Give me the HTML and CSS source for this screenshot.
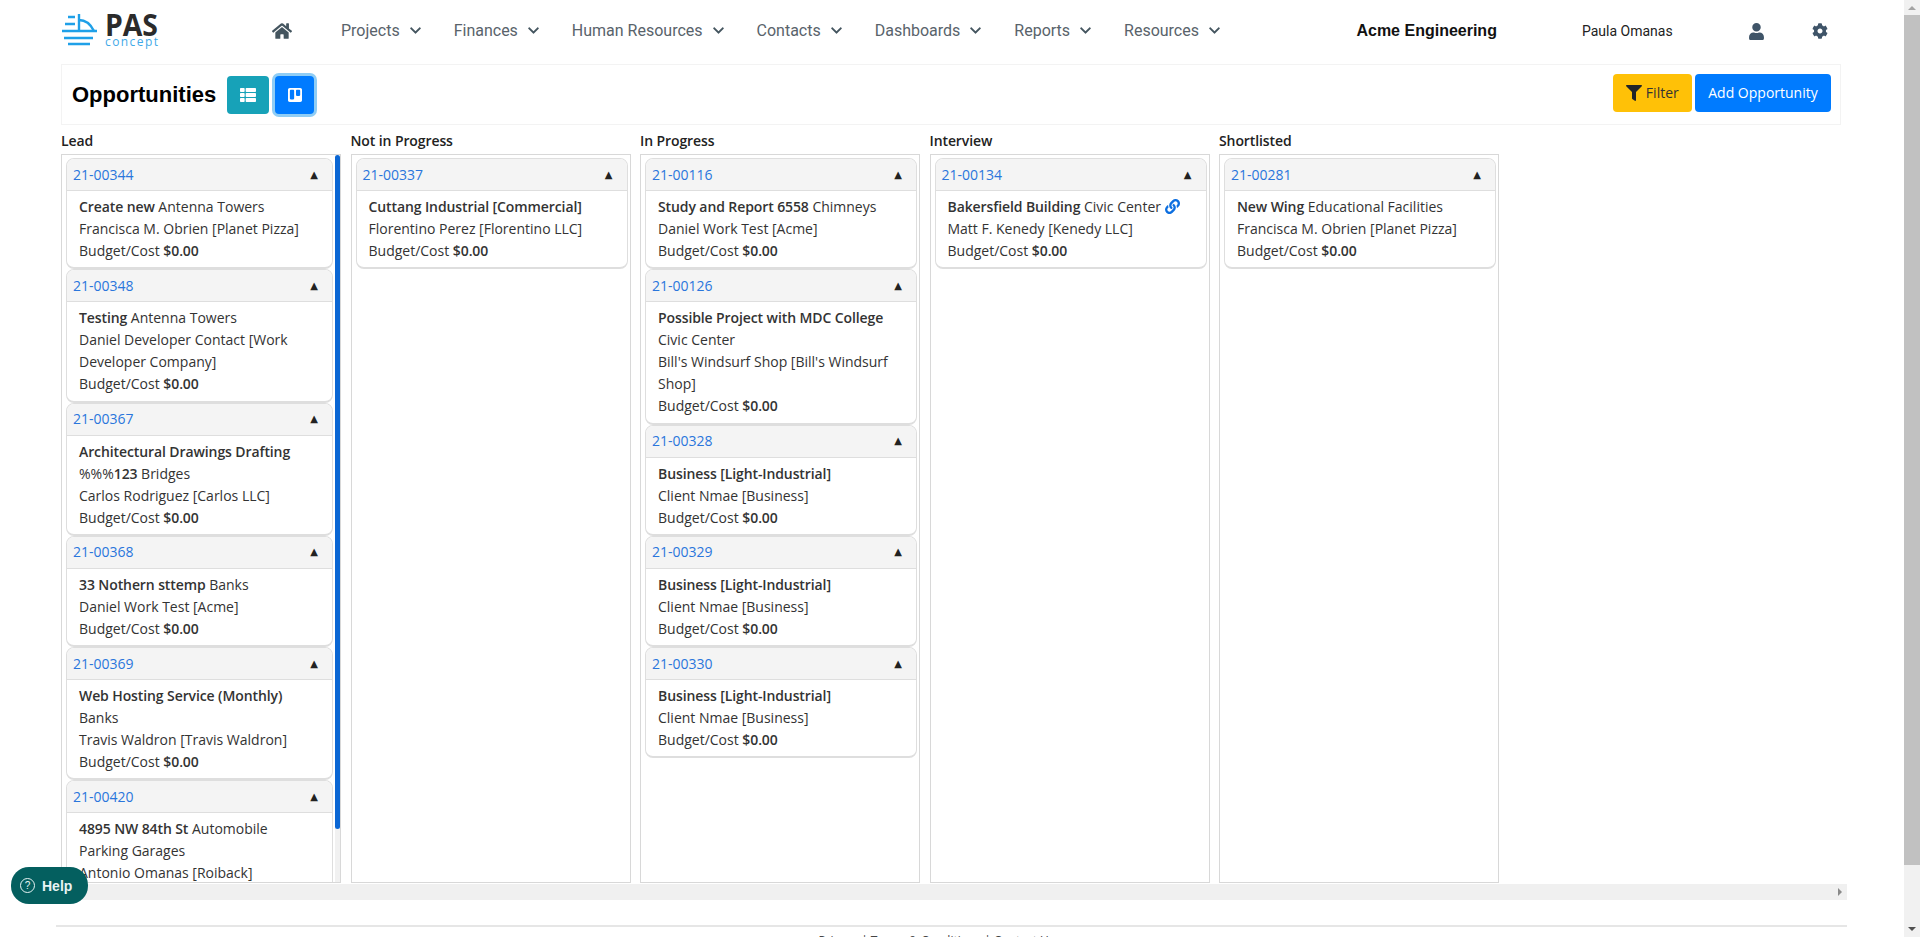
FILE: index.html
```html
<!DOCTYPE html>
<html lang="en">
<head>
<meta charset="UTF-8">
<title>Opportunities</title>
<link rel="stylesheet" href="styles.css">
</head>
<body>
  <div class="page">
    <nav class="navbar">
      <svg class="logo" width="100" height="42" viewBox="0 0 100 42">
        <g stroke="#1fa0e8" stroke-width="2.4" fill="none">
          <path d="M7 7h7M4 14h10M1 21h35M3 28h29M7 34h22"/>
          <path d="M18 4v17M18 10c7 0 12 5 15 11"/>
        </g>
        <text class="logo-pas" x="44" y="26" textLength="53" lengthAdjust="spacingAndGlyphs">PAS</text>
        <text class="logo-sub" x="44" y="36" textLength="53" lengthAdjust="spacing">concept</text>
      </svg>
      <svg class="home-icon" width="20" height="18" viewBox="0 0 576 512"><path d="M280.37 148.26L96 300.11V464a16 16 0 0 0 16 16l112.06-.29a16 16 0 0 0 15.92-16V368a16 16 0 0 1 16-16h64a16 16 0 0 1 16 16v95.64a16 16 0 0 0 16 16.05L464 480a16 16 0 0 0 16-16V300L295.67 148.26a12.19 12.19 0 0 0-15.3 0zM571.6 251.47L488 182.56V44.05a12 12 0 0 0-12-12h-56a12 12 0 0 0-12 12v72.61L318.47 43a48 48 0 0 0-61 0L4.34 251.47a12 12 0 0 0-1.6 16.9l25.5 31A12 12 0 0 0 45.15 301l235.22-193.74a12.19 12.19 0 0 1 15.3 0L530.9 301a12 12 0 0 0 16.9-1.6l25.5-31a12 12 0 0 0-1.7-16.93z"/></svg>
      <ul class="menu">
        <li>Projects <svg class="chev" width="11" height="13" viewBox="0 0 448 512"><path d="M207.029 381.476L12.686 187.132c-9.373-9.373-9.373-24.569 0-33.941l22.667-22.667c9.357-9.357 24.522-9.375 33.901-.04L224 284.505l154.745-154.021c9.379-9.335 24.544-9.317 33.901.04l22.667 22.667c9.373 9.373 9.373 24.569 0 33.941L240.971 381.476c-9.373 9.372-24.569 9.372-33.942 0z"/></svg></li>
        <li>Finances <svg class="chev" width="11" height="13" viewBox="0 0 448 512"><path d="M207.029 381.476L12.686 187.132c-9.373-9.373-9.373-24.569 0-33.941l22.667-22.667c9.357-9.357 24.522-9.375 33.901-.04L224 284.505l154.745-154.021c9.379-9.335 24.544-9.317 33.901.04l22.667 22.667c9.373 9.373 9.373 24.569 0 33.941L240.971 381.476c-9.373 9.372-24.569 9.372-33.942 0z"/></svg></li>
        <li>Human Resources <svg class="chev" width="11" height="13" viewBox="0 0 448 512"><path d="M207.029 381.476L12.686 187.132c-9.373-9.373-9.373-24.569 0-33.941l22.667-22.667c9.357-9.357 24.522-9.375 33.901-.04L224 284.505l154.745-154.021c9.379-9.335 24.544-9.317 33.901.04l22.667 22.667c9.373 9.373 9.373 24.569 0 33.941L240.971 381.476c-9.373 9.372-24.569 9.372-33.942 0z"/></svg></li>
        <li>Contacts <svg class="chev" width="11" height="13" viewBox="0 0 448 512"><path d="M207.029 381.476L12.686 187.132c-9.373-9.373-9.373-24.569 0-33.941l22.667-22.667c9.357-9.357 24.522-9.375 33.901-.04L224 284.505l154.745-154.021c9.379-9.335 24.544-9.317 33.901.04l22.667 22.667c9.373 9.373 9.373 24.569 0 33.941L240.971 381.476c-9.373 9.372-24.569 9.372-33.942 0z"/></svg></li>
        <li>Dashboards <svg class="chev" width="11" height="13" viewBox="0 0 448 512"><path d="M207.029 381.476L12.686 187.132c-9.373-9.373-9.373-24.569 0-33.941l22.667-22.667c9.357-9.357 24.522-9.375 33.901-.04L224 284.505l154.745-154.021c9.379-9.335 24.544-9.317 33.901.04l22.667 22.667c9.373 9.373 9.373 24.569 0 33.941L240.971 381.476c-9.373 9.372-24.569 9.372-33.942 0z"/></svg></li>
        <li>Reports <svg class="chev" width="11" height="13" viewBox="0 0 448 512"><path d="M207.029 381.476L12.686 187.132c-9.373-9.373-9.373-24.569 0-33.941l22.667-22.667c9.357-9.357 24.522-9.375 33.901-.04L224 284.505l154.745-154.021c9.379-9.335 24.544-9.317 33.901.04l22.667 22.667c9.373 9.373 9.373 24.569 0 33.941L240.971 381.476c-9.373 9.372-24.569 9.372-33.942 0z"/></svg></li>
        <li>Resources <svg class="chev" width="11" height="13" viewBox="0 0 448 512"><path d="M207.029 381.476L12.686 187.132c-9.373-9.373-9.373-24.569 0-33.941l22.667-22.667c9.357-9.357 24.522-9.375 33.901-.04L224 284.505l154.745-154.021c9.379-9.335 24.544-9.317 33.901.04l22.667 22.667c9.373 9.373 9.373 24.569 0 33.941L240.971 381.476c-9.373 9.372-24.569 9.372-33.942 0z"/></svg></li>
      </ul>
      <div class="company">Acme Engineering</div>
      <div class="username">Paula Omanas</div>
      <svg class="user-icon" width="15" height="17" viewBox="0 0 448 512"><path d="M224 256c70.7 0 128-57.3 128-128S294.7 0 224 0 96 57.3 96 128s57.3 128 128 128zm89.6 32h-16.7c-22.2 10.2-46.9 16-72.9 16s-50.6-5.8-72.9-16h-16.7C60.2 288 0 348.2 0 422.4V464c0 26.5 21.5 48 48 48h352c26.5 0 48-21.5 48-48v-41.6c0-74.2-60.2-134.4-134.4-134.4z"/></svg>
      <svg class="gear-icon" width="16" height="16" viewBox="0 0 512 512"><path d="M487.4 315.7l-42.6-24.6c4.3-23.2 4.3-47 0-70.2l42.6-24.6c4.9-2.8 7.1-8.6 5.5-14-11.1-35.6-30-67.8-54.7-94.6-3.8-4.1-10-5.1-14.8-2.3L380.8 110c-17.9-15.4-38.5-27.3-60.8-35.1V25.8c0-5.6-3.9-10.5-9.4-11.7-36.7-8.2-74.3-7.8-109.2 0-5.5 1.2-9.4 6.1-9.4 11.7V75c-22.2 7.9-42.8 19.8-60.8 35.1L88.7 85.5c-4.9-2.8-11-1.9-14.8 2.3-24.7 26.7-43.6 58.9-54.7 94.6-1.7 5.4.6 11.2 5.5 14L67.3 221c-4.3 23.2-4.3 47 0 70.2l-42.6 24.6c-4.9 2.8-7.1 8.6-5.5 14 11.1 35.6 30 67.8 54.7 94.6 3.8 4.1 10 5.1 14.8 2.3l42.6-24.6c17.9 15.4 38.5 27.3 60.8 35.1v49.2c0 5.6 3.9 10.5 9.4 11.7 36.7 8.2 74.3 7.8 109.2 0 5.5-1.2 9.4-6.1 9.4-11.7v-49.2c22.2-7.9 42.8-19.8 60.8-35.1l42.6 24.6c4.9 2.8 11 1.9 14.8-2.3 24.7-26.7 43.6-58.9 54.7-94.6 1.5-5.5-.7-11.3-5.6-14.1zM256 336c-44.1 0-80-35.9-80-80s35.9-80 80-80 80 35.9 80 80-35.9 80-80 80z"/></svg>
    </nav>

    <div class="title-panel">
      <h1>Opportunities</h1>
      <button class="view-btn view-list"><svg width="16" height="16" viewBox="0 0 512 512"><path d="M149.333 216v80c0 13.255-10.745 24-24 24H24c-13.255 0-24-10.745-24-24v-80c0-13.255 10.745-24 24-24h101.333c13.255 0 24 10.745 24 24zM0 376v80c0 13.255 10.745 24 24 24h101.333c13.255 0 24-10.745 24-24v-80c0-13.255-10.745-24-24-24H24c-13.255 0-24 10.745-24 24zM125.333 32H24C10.745 32 0 42.745 0 56v80c0 13.255 10.745 24 24 24h101.333c13.255 0 24-10.745 24-24V56c0-13.255-10.745-24-24-24zm80 448H488c13.255 0 24-10.745 24-24v-80c0-13.255-10.745-24-24-24H205.333c-13.255 0-24 10.745-24 24v80c0 13.255 10.745 24 24 24zm-24-424v80c0 13.255 10.745 24 24 24H488c13.255 0 24-10.745 24-24V56c0-13.255-10.745-24-24-24H205.333c-13.255 0-24 10.745-24 24zm24 264H488c13.255 0 24-10.745 24-24v-80c0-13.255-10.745-24-24-24H205.333c-13.255 0-24 10.745-24 24v80c0 13.255 10.745 24 24 24z"/></svg></button>
      <button class="view-btn view-board"><svg width="14" height="16" viewBox="0 0 448 512"><path d="M392.3 32H56.1C25.1 32 0 57.1 0 88c-.1 0 0-4 0 336 0 30.9 25.1 56 56 56h336.2c30.8-.2 55.7-25.2 55.7-56V88c.1-30.8-24.8-55.8-55.6-56zM197 371.3c-.2 14.7-12.1 26.6-26.9 26.6H87.4c-14.8.1-26.9-11.8-27-26.6V117.1c0-14.8 12-26.9 26.9-26.9h82.9c14.8 0 26.9 12 26.9 26.9v254.2zm193.1-112c0 14.8-12 26.9-26.9 26.9h-81c-14.8 0-26.9-12-26.9-26.9V117.2c0-14.8 12-26.9 26.8-26.9h81.1c14.8 0 26.9 12 26.9 26.9v142.1z"/></svg></button>
      <div class="panel-actions">
        <button class="btn-filter"><svg width="16" height="16" viewBox="0 0 512 512"><path d="M487.976 0H24.028C2.71 0-8.047 25.866 7.058 40.971L192 225.941V432c0 7.831 3.821 15.17 10.237 19.662l80 55.98C298.02 518.69 320 507.493 320 487.98V225.941l184.947-184.97C520.021 25.896 509.338 0 487.976 0z"/></svg> Filter</button>
        <button class="btn-add">Add Opportunity</button>
      </div>
    </div>

    <div class="board">
      <section class="stage">
        <div class="stage-name">Lead</div>
        <div class="stage-box stage-scrolled">
          <div class="cards">
            <div class="card"><div class="card-head"><a href="#">21-00344</a><span class="arrow">▲</span></div><div class="card-body"><b>Create new</b> Antenna Towers<br>Francisca M. Obrien [Planet Pizza]<br>Budget/Cost <b>$0.00</b></div></div>
            <div class="card"><div class="card-head"><a href="#">21-00348</a><span class="arrow">▲</span></div><div class="card-body"><b>Testing</b> Antenna Towers<br>Daniel Developer Contact [Work Developer Company]<br>Budget/Cost <b>$0.00</b></div></div>
            <div class="card"><div class="card-head"><a href="#">21-00367</a><span class="arrow">▲</span></div><div class="card-body"><b>Architectural Drawings Drafting</b><br>%%%<b>123</b> Bridges<br>Carlos Rodriguez [Carlos LLC]<br>Budget/Cost <b>$0.00</b></div></div>
            <div class="card"><div class="card-head"><a href="#">21-00368</a><span class="arrow">▲</span></div><div class="card-body"><b>33 Nothern sttemp</b> Banks<br>Daniel Work Test [Acme]<br>Budget/Cost <b>$0.00</b></div></div>
            <div class="card"><div class="card-head"><a href="#">21-00369</a><span class="arrow">▲</span></div><div class="card-body"><b>Web Hosting Service (Monthly)</b><br>Banks<br>Travis Waldron [Travis Waldron]<br>Budget/Cost <b>$0.00</b></div></div>
            <div class="card"><div class="card-head"><a href="#">21-00420</a><span class="arrow">▲</span></div><div class="card-body"><b>4895 NW 84th St</b> Automobile<br>Parking Garages<br>Antonio Omanas [Roiback]<br>Budget/Cost <b>$0.00</b></div></div>
          </div>
          <div class="stage-scroll"><div class="stage-thumb"></div></div>
        </div>
      </section>

      <section class="stage">
        <div class="stage-name">Not in Progress</div>
        <div class="stage-box">
          <div class="cards">
            <div class="card"><div class="card-head"><a href="#">21-00337</a><span class="arrow">▲</span></div><div class="card-body"><b>Cuttang Industrial [Commercial]</b><br>Florentino Perez [Florentino LLC]<br>Budget/Cost <b>$0.00</b></div></div>
          </div>
        </div>
      </section>

      <section class="stage">
        <div class="stage-name">In Progress</div>
        <div class="stage-box">
          <div class="cards">
            <div class="card"><div class="card-head"><a href="#">21-00116</a><span class="arrow">▲</span></div><div class="card-body"><b>Study and Report 6558</b> Chimneys<br>Daniel Work Test [Acme]<br>Budget/Cost <b>$0.00</b></div></div>
            <div class="card"><div class="card-head"><a href="#">21-00126</a><span class="arrow">▲</span></div><div class="card-body"><b>Possible Project with MDC College</b><br>Civic Center<br>Bill's Windsurf Shop [Bill's Windsurf Shop]<br>Budget/Cost <b>$0.00</b></div></div>
            <div class="card"><div class="card-head"><a href="#">21-00328</a><span class="arrow">▲</span></div><div class="card-body"><b>Business [Light-Industrial]</b><br>Client Nmae [Business]<br>Budget/Cost <b>$0.00</b></div></div>
            <div class="card"><div class="card-head"><a href="#">21-00329</a><span class="arrow">▲</span></div><div class="card-body"><b>Business [Light-Industrial]</b><br>Client Nmae [Business]<br>Budget/Cost <b>$0.00</b></div></div>
            <div class="card"><div class="card-head"><a href="#">21-00330</a><span class="arrow">▲</span></div><div class="card-body"><b>Business [Light-Industrial]</b><br>Client Nmae [Business]<br>Budget/Cost <b>$0.00</b></div></div>
          </div>
        </div>
      </section>

      <section class="stage">
        <div class="stage-name">Interview</div>
        <div class="stage-box">
          <div class="cards">
            <div class="card"><div class="card-head"><a href="#">21-00134</a><span class="arrow">▲</span></div><div class="card-body"><b>Bakersfield Building</b> Civic Center <svg class="link-icon" width="15" height="15" viewBox="0 0 512 512"><path d="M326.612 185.391c59.747 59.809 58.927 155.698.36 214.59-.11.12-.24.25-.36.37l-67.2 67.2c-59.27 59.27-155.699 59.262-214.96 0-59.27-59.26-59.27-155.7 0-214.96l37.106-37.106c9.84-9.84 26.786-3.3 27.294 10.606.648 17.722 3.826 35.527 9.69 52.721 1.986 5.822.567 12.262-3.783 16.612l-13.087 13.087c-28.026 28.026-28.905 73.66-1.155 101.96 28.024 28.579 74.086 28.749 102.325.51l67.2-67.19c28.191-28.191 28.073-73.757 0-101.83-3.701-3.694-7.429-6.564-10.341-8.569a16.037 16.037 0 0 1-6.947-12.606c-.396-10.567 3.348-21.456 11.698-29.806l21.054-21.055c5.521-5.521 14.182-6.199 20.584-1.731a152.482 152.482 0 0 1 20.522 17.197zM467.547 44.449c-59.261-59.262-155.69-59.27-214.96 0l-67.2 67.2c-.12.12-.25.25-.36.37-58.566 58.892-59.387 154.781.36 214.59a152.454 152.454 0 0 0 20.521 17.196c6.402 4.468 15.064 3.789 20.584-1.731l21.054-21.055c8.35-8.35 12.094-19.239 11.698-29.806a16.037 16.037 0 0 0-6.947-12.606c-2.912-2.005-6.64-4.875-10.341-8.569-28.073-28.073-28.191-73.639 0-101.83l67.2-67.19c28.239-28.239 74.3-28.069 102.325.51 27.75 28.3 26.872 73.934-1.155 101.96l-13.087 13.087c-4.35 4.35-5.769 10.79-3.783 16.612 5.864 17.194 9.042 34.999 9.69 52.721.509 13.906 17.454 20.446 27.294 10.606l37.106-37.106c59.271-59.259 59.271-155.699.001-214.959z"/></svg><br>Matt F. Kenedy [Kenedy LLC]<br>Budget/Cost <b>$0.00</b></div></div>
          </div>
        </div>
      </section>

      <section class="stage">
        <div class="stage-name">Shortlisted</div>
        <div class="stage-box">
          <div class="cards">
            <div class="card"><div class="card-head"><a href="#">21-00281</a><span class="arrow">▲</span></div><div class="card-body"><b>New Wing</b> Educational Facilities<br>Francisca M. Obrien [Planet Pizza]<br>Budget/Cost <b>$0.00</b></div></div>
          </div>
        </div>
      </section>
    </div>

    <div class="board-scroll"><span class="board-scroll-arrow"></span></div>

    <footer class="footer">Privacy | Terms &amp; Conditions | Contact Us</footer>
  </div>

  <div class="page-scroll">
    <span class="page-scroll-up"></span>
    <div class="page-scroll-thumb"></div>
    <span class="page-scroll-down"></span>
  </div>

  <a class="help-btn" href="#"><span class="help-circle">?</span> Help</a>
</body>
</html>
```

FILE: styles.css
```css
html, body {
  height: 100%;
}

body {
  margin: 0;
  display: flex;
  overflow: hidden;
  background-color: #fff;
  color: #333;
  font-family: "Open Sans", Arial, sans-serif;
  font-size: 14px;
  line-height: 22px;
}

.page {
  flex: 1;
  min-width: 0;
  padding: 0 57px 0 56px;
}

/* top nav */
.navbar {
  display: flex;
  align-items: center;
  box-sizing: border-box;
  height: 64px;
  padding: 0 0 2px 5px;
}

.logo {
  flex: none;
}

.logo-pas {
  font-family: "Open Sans", sans-serif;
  font-size: 31px;
  font-weight: 700;
  fill: #2b2b2b;
}

.logo-sub {
  font-family: "Open Sans", sans-serif;
  font-size: 12px;
  fill: #3fa9e8;
}

.home-icon {
  flex: none;
  margin-left: 111px;
  fill: #44555f;
}

.menu {
  display: flex;
  gap: 33px;
  list-style: none;
  margin: 0 0 0 49px;
  padding: 0;
  font-family: Roboto, sans-serif;
  font-size: 16px;
  color: #59636b;
  white-space: nowrap;
}

.chev {
  margin-left: 6px;
  vertical-align: -1px;
  fill: #44555f;
}

.company {
  margin-left: 136.5px;
  font-family: "Liberation Sans", Arial, sans-serif;
  font-size: 16px;
  font-weight: 700;
  color: #111;
  white-space: nowrap;
}

.username {
  margin-left: 85px;
  font-family: Roboto, sans-serif;
  font-size: 14px;
  color: #222;
  white-space: nowrap;
}

.user-icon {
  flex: none;
  margin-left: 76px;
  fill: #3f5468;
}

.gear-icon {
  flex: none;
  margin-left: 48px;
  fill: #3f5468;
}

/* title bar */
.title-panel {
  display: flex;
  align-items: center;
  height: 61px;
  box-sizing: border-box;
  margin: 0 6px 0 5px;
  padding: 0 9px 0 10px;
  border: 1px solid #f3f3f3;
}

.title-panel h1 {
  margin: 0 11px 0 0;
  font-family: "Liberation Sans", Arial, sans-serif;
  font-size: 22px;
  font-weight: 700;
  line-height: 30px;
  color: #000;
}

.view-btn {
  display: flex;
  align-items: center;
  justify-content: center;
  height: 38px;
  padding: 0;
  border: none;
  border-radius: 4px;
  fill: #fff;
}

.view-list {
  width: 42px;
  background-color: #17a2b8;
}

.view-board {
  width: 39px;
  margin-left: 6px;
  background-color: #007bff;
  box-shadow: 0 0 0 3px #8fcdf5;
}

.panel-actions {
  display: flex;
  gap: 3px;
  margin-left: auto;
  margin-top: -4px;
}

.btn-filter, .btn-add {
  height: 38px;
  border: none;
  border-radius: 4px;
  font-family: "Open Sans", Arial, sans-serif;
  font-size: 14px;
}

.btn-filter {
  width: 79px;
  padding: 0;
  background-color: #ffc107;
  color: #333;
  fill: #212529;
}

.btn-filter svg {
  vertical-align: -3px;
}

.btn-add {
  width: 136px;
  padding: 0;
  background-color: #007bff;
  color: #fff;
}

/* kanban */
.board {
  display: flex;
  gap: 9.5px;
  margin: 5px 0 0 5px;
  height: 753px;
  overflow: hidden;
}

.stage {
  display: flex;
  flex-direction: column;
  flex: none;
  width: 280px;
}

.stage-name {
  font-weight: 600;
  letter-spacing: -.1px;
  color: #222;
  margin-bottom: 2px;
}

.stage-box {
  flex: 1;
  display: flex;
  min-height: 0;
  overflow: hidden;
  box-sizing: border-box;
  padding: 3px 2px 0 4px;
  border: 1px solid #d8d8d8;
}

.cards {
  flex: 1;
  min-width: 0;
}

.stage-scrolled {
  padding-right: 0;
}

.stage-scrolled .cards {
  margin-right: 2px;
}

.stage-scroll {
  flex: none;
  width: 5px;
  margin-top: -3px;
  background-color: #f1f1f1;
}

.stage-thumb {
  height: 674px;
  border-radius: 3px;
  background-color: #0a66d4;
}

.card {
  border: 1px solid #dedede;
  border-bottom-width: 2px;
  border-radius: 8px;
  overflow: hidden;
  background-color: #fff;
}

.card-head {
  display: flex;
  align-items: center;
  justify-content: space-between;
  height: 31px;
  padding: 0 14px 0 6px;
  border-bottom: 1px solid #dedede;
  background-color: #f4f4f4;
}

.card-head a {
  color: #2a76dc;
  text-decoration: none;
}

.arrow {
  font-family: "DejaVu Sans", sans-serif;
  font-size: 10px;
  color: #222;
}

.card-body {
  padding: 5px 12px 5.25px 12px;
}

.card-body b {
  font-weight: 600;
  letter-spacing: -.1px;
}

.link-icon {
  vertical-align: -2px;
  fill: #0d6fe0;
}

/* fake scrollbars, the page itself doesn't scroll */
.board-scroll {
  display: flex;
  align-items: center;
  justify-content: flex-end;
  height: 16px;
  margin-top: 1px;
  padding-right: 5px;
  background-color: #f0f0f0;
}

.board-scroll-arrow {
  width: 0;
  height: 0;
  border-left: 4px solid #8a8a8a;
  border-top: 4px solid transparent;
  border-bottom: 4px solid transparent;
}

.footer {
  margin-top: 25px;
  padding: 6px 30px 0 0;
  border-top: 2px solid #e6e6e6;
  text-align: center;
  font-size: 12px;
  line-height: 16px;
  color: #444;
}

.page-scroll {
  display: flex;
  flex-direction: column;
  align-items: center;
  flex: none;
  width: 16px;
  background-color: #f1f1f1;
}

.page-scroll-up, .page-scroll-down {
  width: 0;
  height: 0;
  margin: 6px 0;
  border-left: 4px solid transparent;
  border-right: 4px solid transparent;
}

.page-scroll-up {
  border-bottom: 4px solid #a3a3a3;
}

.page-scroll-down {
  margin-top: auto;
  border-top: 4px solid #505050;
}

.page-scroll-thumb {
  width: 100%;
  height: 850px;
  margin-top: -1px;
  background-color: #c1c1c1;
}

.help-btn {
  position: fixed;
  left: 11px;
  top: 867px;
  display: flex;
  align-items: center;
  gap: 7px;
  box-sizing: border-box;
  width: 77px;
  height: 37px;
  padding-left: 9px;
  border-radius: 18px;
  background-color: #045f5f;
  color: #e8f4f4;
  font-family: "Liberation Sans", Arial, sans-serif;
  font-size: 14px;
  font-weight: 700;
  text-decoration: none;
}

.help-circle {
  display: flex;
  align-items: center;
  justify-content: center;
  width: 13px;
  height: 13px;
  border: 1.5px solid #e8f4f4;
  border-radius: 50%;
  font-size: 10px;
  font-weight: 400;
}
```
